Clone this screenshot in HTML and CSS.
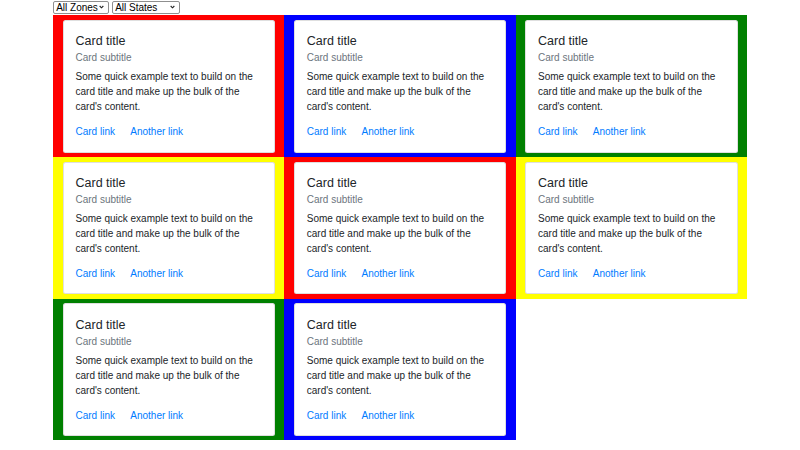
FILE: index.html
```html
<!DOCTYPE html>
<html>
<head>
<meta charset="utf-8">
<link rel="stylesheet" href="styles.css">
</head>
<body>
<div class="container">
  <div class="filters">
    <select class="sel sel-zones"><option>All Zones</option><option>North</option></select>
    <select class="sel sel-states"><option>All States</option><option>California</option></select>
  </div>
  <div class="grid">
    <div class="cell red"><div class="card"><h5 class="card-title">Card title</h5><h6 class="card-subtitle">Card subtitle</h6><p class="card-text">Some quick example text to build on the card title and make up the bulk of the card's content.</p><a href="#" class="card-link">Card link</a> <a href="#" class="card-link">Another link</a></div></div>
    <div class="cell blue"><div class="card"><h5 class="card-title">Card title</h5><h6 class="card-subtitle">Card subtitle</h6><p class="card-text">Some quick example text to build on the card title and make up the bulk of the card's content.</p><a href="#" class="card-link">Card link</a> <a href="#" class="card-link">Another link</a></div></div>
    <div class="cell green"><div class="card"><h5 class="card-title">Card title</h5><h6 class="card-subtitle">Card subtitle</h6><p class="card-text">Some quick example text to build on the card title and make up the bulk of the card's content.</p><a href="#" class="card-link">Card link</a> <a href="#" class="card-link">Another link</a></div></div>
    <div class="cell yellow"><div class="card"><h5 class="card-title">Card title</h5><h6 class="card-subtitle">Card subtitle</h6><p class="card-text">Some quick example text to build on the card title and make up the bulk of the card's content.</p><a href="#" class="card-link">Card link</a> <a href="#" class="card-link">Another link</a></div></div>
    <div class="cell red"><div class="card"><h5 class="card-title">Card title</h5><h6 class="card-subtitle">Card subtitle</h6><p class="card-text">Some quick example text to build on the card title and make up the bulk of the card's content.</p><a href="#" class="card-link">Card link</a> <a href="#" class="card-link">Another link</a></div></div>
    <div class="cell yellow"><div class="card"><h5 class="card-title">Card title</h5><h6 class="card-subtitle">Card subtitle</h6><p class="card-text">Some quick example text to build on the card title and make up the bulk of the card's content.</p><a href="#" class="card-link">Card link</a> <a href="#" class="card-link">Another link</a></div></div>
    <div class="cell green"><div class="card"><h5 class="card-title">Card title</h5><h6 class="card-subtitle">Card subtitle</h6><p class="card-text">Some quick example text to build on the card title and make up the bulk of the card's content.</p><a href="#" class="card-link">Card link</a> <a href="#" class="card-link">Another link</a></div></div>
    <div class="cell blue"><div class="card"><h5 class="card-title">Card title</h5><h6 class="card-subtitle">Card subtitle</h6><p class="card-text">Some quick example text to build on the card title and make up the bulk of the card's content.</p><a href="#" class="card-link">Card link</a> <a href="#" class="card-link">Another link</a></div></div>
  </div>
</div>
</body>
</html>
```
FILE: styles.css
```css
* { box-sizing: border-box; }
html, body {
  margin: 0;
  padding: 0;
  background: #fff;
}
body {
  font-family: "Liberation Sans", Arial, sans-serif;
  font-size: 10px;
  line-height: 15px;
  color: #212529;
}
.container {
  width: 693.75px;
  margin: 0 auto;
}
.filters {
  display: flex;
  gap: 3px;
  height: 15.3px;
  align-items: flex-start;
  padding-top: 0.5px;
}
.sel {
  -webkit-appearance: none;
  appearance: none;
  font-family: "Liberation Sans", Arial, sans-serif;
  font-size: 10px;
  line-height: 11px;
  height: 13px;
  padding: 0 0 0 2px;
  margin: 0;
  border: 1px solid #8f8f8f;
  border-radius: 2px;
  color: #000;
  background: #fff url("data:image/svg+xml;utf8,<svg xmlns='http://www.w3.org/2000/svg' width='6' height='4' viewBox='0 0 6 4'><path d='M0.8 0.8 L3 3 L5.2 0.8' fill='none' stroke='%23222' stroke-width='1.3'/></svg>") no-repeat right 4px center;
  background-size: 5px 4px;
}
.sel-zones { width: 56px; }
.sel-states { width: 68px; }
.grid {
  display: grid;
  grid-template-columns: repeat(3, 1fr);
}
.cell {
  padding: 4.6px 9.375px 4.4px;
}
.red { background: #ff0000; }
.blue { background: #0000ff; }
.green { background: #008000; }
.yellow { background: #ffff00; }
.card {
  background: #fff;
  border: 1px solid rgba(0, 0, 0, 0.125);
  border-radius: 2.5px;
  padding: 12.5px 12px 12.5px 12px;
}
.card-title {
  margin: 0.7px 0 6.8px;
  font-size: 12.5px;
  font-weight: 500;
  line-height: 15px;
}
.card-subtitle {
  margin: -3.75px 0 5px;
  font-size: 10px;
  font-weight: 500;
  line-height: 12px;
  color: #6c757d;
}
.card-text {
  margin: 0 0 10px;
}
.card-link {
  color: #007bff;
  text-decoration: none;
}
.card-link + .card-link {
  margin-left: 12.5px;
}
```
